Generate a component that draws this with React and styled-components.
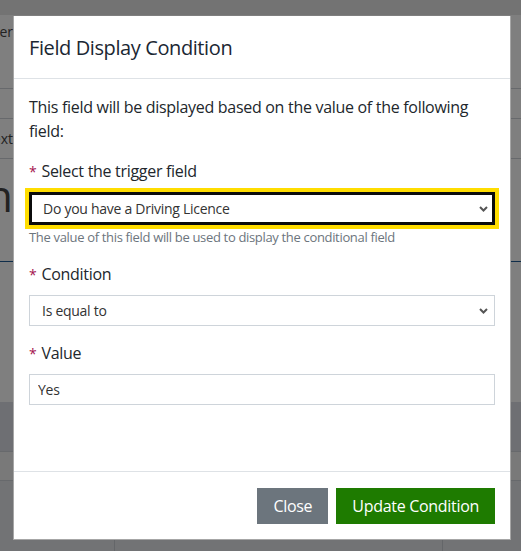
import React from 'react';
import styled, { createGlobalStyle } from 'styled-components';

const GlobalStyle = createGlobalStyle`
  html, body {
    margin: 0;
    padding: 0;
    background: #fff;
  }
  body {
    font-family: 'Open Sans', 'Noto Sans', sans-serif;
    color: #212529;
  }
`;

/* page behind the dialog */
const Page = styled.div`
  position: relative;
  width: 521px;
  height: 551px;
  overflow: hidden;
  display: flex;
  flex-direction: column;
  background: #fff;
`;

const TopBar = styled.div`
  height: 15px;
  background: #e6e6e6;
  flex-shrink: 0;
`;

const BgRow = styled.div`
  display: flex;
  justify-content: space-between;
  align-items: ${({ $align }) => $align || 'center'};
  height: ${({ $h }) => $h}px;
  flex-shrink: 0;
  background: ${({ $bg }) => $bg || '#fff'};
  border-bottom: ${({ $line }) => $line || '1px solid #cfd3d8'};
`;

const ClipCell = styled.div`
  width: 13px;
  overflow: hidden;
  display: flex;
  justify-content: flex-end;
  white-space: nowrap;
  font-size: ${({ $size }) => $size || 14}px;
  color: #444;
  padding-top: ${({ $top }) => $top || 0}px;
`;

const BgTable = styled.div`
  flex: 1;
  display: grid;
  grid-template-columns: 114px 328px 1fr;
  background: #e4e6ea;
`;

const BgCell = styled.div`
  border-left: ${({ $first }) => ($first ? 'none' : '1px solid #c8ccd2')};
`;

const Overlay = styled.div`
  position: absolute;
  inset: 0;
  background: rgba(0, 0, 0, 0.5);
  padding: 16px 0 0 13px;
  box-sizing: border-box;
`;

/* dialog */
const Modal = styled.div`
  width: 498px;
  box-sizing: border-box;
  background: #fff;
  border: 1px solid rgba(0, 0, 0, 0.35);
  border-top: none;
  display: flex;
  flex-direction: column;
`;

const Header = styled.div`
  padding: 17px 16px 16px 15px;
  border-bottom: 1px solid #dee2e6;
`;

const Title = styled.h5`
  margin: 0;
  font-size: 20px;
  line-height: 29px;
  font-weight: 400;
  letter-spacing: -0.4px;
  color: #1b2733;
`;

const Body = styled.div`
  padding: 16px 15px 66px;
`;

const Intro = styled.p`
  margin: 0 0 16px;
  font-size: 16px;
  line-height: 24px;
  letter-spacing: -0.3px;
  color: #22272c;
`;

const FormGroup = styled.div`
  margin-bottom: 15px;
  &:last-child {
    margin-bottom: 0;
  }
`;

const Label = styled.label`
  display: block;
  margin-bottom: 8px;
  font-size: 16px;
  line-height: 24px;
  letter-spacing: -0.3px;
  color: #22272c;
`;

const Required = styled.span`
  color: #a3124e;
  font-size: 14px;
  margin-right: 5px;
`;

const SelectWrap = styled.div`
  position: relative;
`;

const Select = styled.select`
  display: block;
  width: 100%;
  box-sizing: border-box;
  appearance: none;
  -webkit-appearance: none;
  background: #fff;
  font-family: inherit;
  font-size: 14px;
  letter-spacing: -0.27px;
  color: #333;
  height: ${({ $focused }) => ($focused ? 33 : 31)}px;
  padding: 0 30px 0 ${({ $focused }) => ($focused ? 11 : 12)}px;
  border: ${({ $focused }) => ($focused ? '3px solid #0b0c0c' : '1px solid #ced4da')};
  outline: ${({ $focused }) => ($focused ? '4px solid #ffdd00' : 'none')};
  border-radius: 0;
`;

const Chevron = styled.svg`
  position: absolute;
  right: 7px;
  top: 50%;
  margin-top: -3px;
  width: 9px;
  height: 6px;
  pointer-events: none;
`;

const Input = styled.input`
  display: block;
  width: 100%;
  box-sizing: border-box;
  height: 31px;
  padding: 0 8px;
  font-family: inherit;
  font-size: 14px;
  letter-spacing: -0.27px;
  color: #333;
  border: 1px solid #ced4da;
  border-radius: 0;
  outline: none;
`;

const Help = styled.div`
  margin-top: 3px;
  font-size: 13px;
  line-height: 19px;
  letter-spacing: -0.33px;
  color: #6c757d;
`;

const Footer = styled.div`
  display: flex;
  justify-content: flex-end;
  gap: 8px;
  padding: 16px 15px 15px;
  border-top: 1px solid #dee2e6;
`;

const Button = styled.button`
  height: 36px;
  padding: 0 16px;
  border: none;
  border-radius: 0;
  font-family: inherit;
  font-size: 16px;
  letter-spacing: -0.3px;
  color: #fff;
  background: ${({ $variant }) => ($variant === 'primary' ? '#1e7b00' : '#6c757d')};
  cursor: pointer;
`;

const SelectField = ({ value, focused }) => (
  <SelectWrap>
    <Select $focused={focused} defaultValue={value}>
      <option>{value}</option>
    </Select>
    <Chevron viewBox="0 0 9 6">
      <polyline points="1,1 4.5,4.5 8,1" fill="none" stroke="#555" strokeWidth="2" />
    </Chevron>
  </SelectWrap>
);

const App = () => (
  <>
    <GlobalStyle />
    <Page>
      <TopBar />
      <BgRow $h={73} $align="flex-start">
        <ClipCell $top={7}>Order</ClipCell>
        <ClipCell />
      </BgRow>
      <BgRow $h={29} />
      <BgRow $h={39}>
        <ClipCell>Text</ClipCell>
        <ClipCell />
      </BgRow>
      <BgRow $h={102} $align="flex-start" $line="1px solid #1f5a94">
        <ClipCell $size={44} $top={6}>Condition</ClipCell>
        <ClipCell />
      </BgRow>
      <BgRow $h={140} $line="none" />
      <BgRow $h={49} $bg="#dcdfe6" />
      <BgRow $h={28} $bg="#f2f2f2" />
      <BgTable>
        <BgCell $first />
        <BgCell />
        <BgCell />
      </BgTable>

      <Overlay>
        <Modal>
          <Header>
            <Title>Field Display Condition</Title>
          </Header>
          <Body>
            <Intro>This field will be displayed based on the value of the following field:</Intro>
            <FormGroup>
              <Label><Required>*</Required>Select the trigger field</Label>
              <SelectField value="Do you have a Driving Licence" focused />
              <Help>The value of this field will be used to display the conditional field</Help>
            </FormGroup>
            <FormGroup>
              <Label><Required>*</Required>Condition</Label>
              <SelectField value="Is equal to" />
            </FormGroup>
            <FormGroup>
              <Label><Required>*</Required>Value</Label>
              <Input defaultValue="Yes" />
            </FormGroup>
          </Body>
          <Footer>
            <Button>Close</Button>
            <Button $variant="primary">Update Condition</Button>
          </Footer>
        </Modal>
      </Overlay>
    </Page>
  </>
);

export default App;
